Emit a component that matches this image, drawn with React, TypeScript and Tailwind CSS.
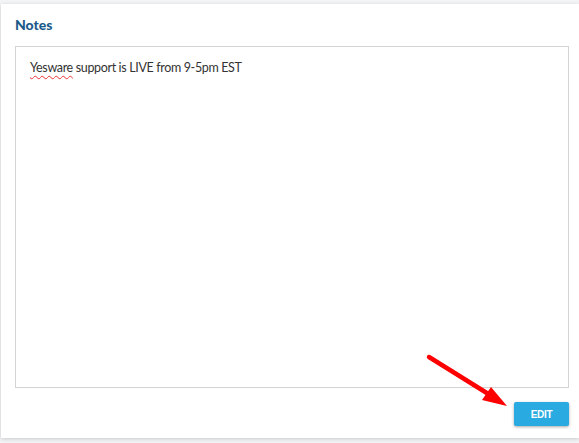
import React from 'react';

const App = () => {
  return (
    <div className="w-[579px] h-[443px] bg-[#f3f4f6] pt-[4px] pl-[1px] overflow-hidden relative" style={{ fontFamily: 'Lato, "Liberation Sans", sans-serif' }}>
      <div className="w-[578px] h-[434px] bg-white shadow-[0_1px_4px_rgba(0,0,0,0.18)] pl-[14px] pr-[10px] pt-[12px] flex flex-col">
        {/* Title */}
        <h2 className="text-[14px] leading-[18px] font-black text-[#1b5b8a]">
          Notes
        </h2>

        {/* Notes box */}
        <div className="mt-[12px] w-[554px] h-[342px] border border-[#d4d4d4] px-[14px] pt-[13px]">
          <p className="text-[12.5px] leading-[16px] text-[#333333] tracking-[-0.35px]">
            <span className="underline decoration-wavy decoration-[#e33] decoration-1 underline-offset-[3px]">Yesware</span>{' '}
            support is LIVE from 9-5pm EST
          </p>
        </div>

        {/* Actions */}
        <div className="flex justify-end mt-[14px]">
          <button
            type="button"
            className="w-[55px] h-[24px] bg-[#29abe2] text-white text-[10px] font-bold tracking-[-0.3px] rounded-[2px] shadow-[0_1px_3px_rgba(0,0,0,0.35)]"
            style={{ fontFamily: '"Liberation Sans", Arial, sans-serif' }}
          >
            EDIT
          </button>
        </div>
      </div>

      {/* Annotation arrow */}
      <svg className="absolute left-0 top-0 pointer-events-none" width="579" height="443" viewBox="0 0 579 443">
        <line x1="429" y1="357" x2="490" y2="395" stroke="#ff0000" strokeWidth="4.5" strokeLinecap="round" />
        <polygon points="507,406 482,400 491,387" fill="#ff0000" />
      </svg>
    </div>
  );
};

export default App;
